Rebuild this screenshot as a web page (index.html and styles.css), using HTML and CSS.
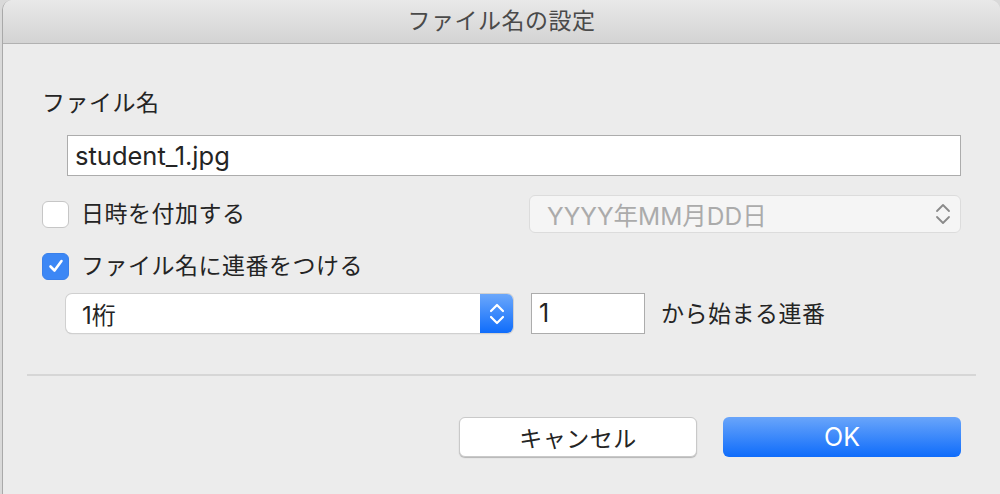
FILE: index.html
```html
<!DOCTYPE html>
<html lang="ja">
<head>
  <meta charset="UTF-8" />
  <title>ファイル名の設定</title>
  <link rel="stylesheet" href="styles.css">
</head>
<body>
  <div class="window">
    <div class="titlebar">ファイル名の設定</div>

    <div class="content">
      <div class="label">ファイル名</div>
      <div class="field name-field">student_1.jpg</div>

      <div class="row date-row">
        <div class="check-line">
          <span class="checkbox"></span>
          <span class="label">日時を付加する</span>
        </div>
        <div class="popup disabled">
          <span class="popup-text">YYYY年MM月DD日</span>
          <span class="arrows">
            <svg width="16" height="24" viewBox="0 0 16 24"><path d="M2 9 L8 3 L14 9 M2 15 L8 21 L14 15" fill="none" stroke="#8a8a8a" stroke-width="1.8" stroke-linecap="round" stroke-linejoin="round"/></svg>
          </span>
        </div>
      </div>

      <div class="row serial-row">
        <div class="check-line">
          <span class="checkbox checked">
            <svg width="18" height="18" viewBox="0 0 18 18"><path d="M3.5 9.5 L7.5 13.5 L14.5 4" fill="none" stroke="#fff" stroke-width="2.6" stroke-linecap="round" stroke-linejoin="round"/></svg>
          </span>
          <span class="label">ファイル名に連番をつける</span>
        </div>
      </div>

      <div class="row digits-row">
        <div class="popup active">
          <span class="popup-text">1桁</span>
          <span class="arrows blue">
            <svg width="16" height="24" viewBox="0 0 16 24"><path d="M2 9 L8 3 L14 9 M2 15 L8 21 L14 15" fill="none" stroke="#fff" stroke-width="2.2" stroke-linecap="round" stroke-linejoin="round"/></svg>
          </span>
        </div>
        <div class="field start-field">1</div>
        <span class="label">から始まる連番</span>
      </div>

      <div class="separator"></div>

      <div class="buttons">
        <button class="btn cancel">キャンセル</button>
        <button class="btn ok">OK</button>
      </div>
    </div>
  </div>
</body>
</html>
```

FILE: styles.css
```css
html, body {
  margin: 0;
  height: 100%;
  overflow: hidden;
}
body {
  background: #d9d9d9;
  font-family: Inter, "Noto Sans CJK JP", sans-serif;
  color: #242424;
}
.window {
  margin-left: 2px;
  height: 100%;
  background: #ececec;
  border-left: 1px solid #a9a9a9;
  border-radius: 10px 10px 0 0;
  overflow: hidden;
}
.titlebar {
  height: 43px;
  line-height: 43px;
  text-align: center;
  font-size: 23px;
  letter-spacing: 0.5px;
  color: #4a4a4a;
  background: linear-gradient(#e9e9e9, #d3d3d3);
  border-bottom: 1px solid #b1b1b1;
}
.content {
  padding: 0 39px 0 39px;
}
.label {
  font-size: 23px;
  letter-spacing: 0.5px;
  line-height: 30px;
  white-space: nowrap;
}
.content > .label {
  margin-top: 44px;
}
.field {
  box-sizing: border-box;
  height: 41px;
  background: #fff;
  border: 1px solid #acacac;
  font-size: 25px;
  line-height: 39px;
  padding-left: 7px;
}
.name-field {
  margin: 17px 0 0 25px;
  font-size: 25.5px;
}
.row {
  display: flex;
  align-items: center;
}
.date-row {
  margin-top: 19px;
  height: 38px;
  justify-content: space-between;
}
.serial-row {
  margin-top: 14px;
  height: 38px;
}
.digits-row {
  margin-top: 8px;
  height: 41px;
  padding-left: 24px;
}
.check-line {
  display: flex;
  align-items: center;
  gap: 12px;
}
.checkbox {
  box-sizing: border-box;
  width: 27px;
  height: 27px;
  border-radius: 6px;
  background: #fff;
  border: 1px solid #c6c6c6;
  display: flex;
  align-items: center;
  justify-content: center;
}
.checkbox.checked {
  background: #3c87f5;
  border-color: #3a80ea;
}
.popup {
  box-sizing: border-box;
  display: flex;
  align-items: center;
  justify-content: space-between;
  border-radius: 6px;
  font-size: 24px;
}
.popup.disabled {
  width: 432px;
  height: 38px;
  background: #f5f5f5;
  border: 1px solid #dcdcdc;
  color: #ababab;
  padding-left: 17px;
  font-size: 24.5px;
}
.popup.disabled .arrows {
  width: 34px;
}
.popup.active {
  width: 447px;
  height: 39px;
  background: #fff;
  box-shadow: 0 0 0 1px #d0d0d0, 0 1px 1px #b8b8b8;
  padding-left: 16px;
  overflow: hidden;
}
.arrows {
  display: flex;
  align-items: center;
  justify-content: center;
  height: 100%;
}
.arrows.blue {
  width: 33px;
  background: linear-gradient(#6ba7fb, #0f6dfb);
}
.start-field {
  width: 114px;
  margin-left: 18px;
}
.digits-row .label {
  margin-left: 16px;
}
.separator {
  margin: 40px -15px 0 -15px;
  height: 2px;
  background: #d6d6d6;
}
.buttons {
  display: flex;
  justify-content: flex-end;
  gap: 26px;
  margin-top: 41px;
}
.btn {
  box-sizing: border-box;
  width: 238px;
  height: 40px;
  border-radius: 6px;
  font-family: Inter, "Noto Sans CJK JP", sans-serif;
  font-size: 23px;
  letter-spacing: 0.5px;
  padding: 0;
}
.cancel {
  background: #fff;
  color: #242424;
  border: 1px solid #c9c9c9;
  box-shadow: 0 1px 1px #b5b5b5;
}
.ok {
  background: linear-gradient(#69a5fa, #0f6cfb);
  color: #fff;
  border: none;
  letter-spacing: 0;
  font-size: 25px;
}
```
